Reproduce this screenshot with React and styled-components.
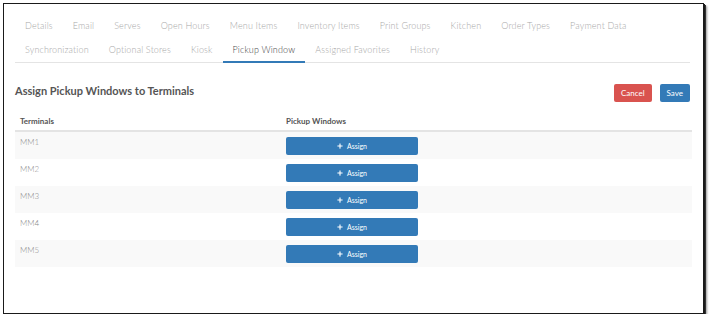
import React from "react";
import styled, { createGlobalStyle } from "styled-components";
import { FaPlus } from "react-icons/fa";

const GlobalStyle = createGlobalStyle`
  html, body {
    margin: 0;
    padding: 0;
    background: #ffffff;
  }
  body {
    font-family: "Lato", "Open Sans", sans-serif;
  }
`;

const tabs = [
  "Details",
  "Email",
  "Serves",
  "Open Hours",
  "Menu Items",
  "Inventory Items",
  "Print Groups",
  "Kitchen",
  "Order Types",
  "Payment Data",
  "Synchronization",
  "Optional Stores",
  "Kiosk",
  "Pickup Window",
  "Assigned Favorites",
  "History",
];

const terminals = ["MM1", "MM2", "MM3", "MM4", "MM5"];

function App() {
  return (
    <>
      <GlobalStyle />
      <Frame>
        <TabBar>
          {tabs.map((t) => (
            <Tab key={t} $active={t === "Pickup Window"}>
              {t}
            </Tab>
          ))}
        </TabBar>

        <HeadRow>
          <Title>Assign Pickup Windows to Terminals</Title>
          <Actions>
            <ActionButton $variant="danger">Cancel</ActionButton>
            <ActionButton $variant="primary">Save</ActionButton>
          </Actions>
        </HeadRow>

        <Table>
          <thead>
            <tr>
              <Th $first>Terminals</Th>
              <Th>Pickup Windows</Th>
            </tr>
          </thead>
          <tbody>
            {terminals.map((name, i) => (
              <Row key={name} $striped={i % 2 === 0}>
                <Td>{name}</Td>
                <Td>
                  <AssignButton>
                    <FaPlus size={6} />
                    <span>Assign</span>
                  </AssignButton>
                </Td>
              </Row>
            ))}
          </tbody>
        </Table>
      </Frame>
    </>
  );
}

export default App;

const Frame = styled.div`
  box-sizing: border-box;
  margin: 3px 0 0 3px;
  width: 701px;
  height: 311px;
  border: 1px solid #1a1a1a;
  box-shadow: 1px 1px 0 #1a1a1a, 2px 2px 0 #333, 3px 3px 2px #9a9a9a;
  padding: 10px 13px 0 11px;
  background: #fff;
`;

const TabBar = styled.ul`
  list-style: none;
  margin: 0;
  padding: 0;
  display: flex;
  flex-wrap: wrap;
  border-bottom: 1px solid #e4e4e4;
`;

const Tab = styled.li`
  padding: 5px 10px 4px;
  height: 14px;
  line-height: 14px;
  font-size: 9px;
  font-weight: 300;
  letter-spacing: 0.15px;
  color: ${(p) => (p.$active ? "#444" : "#a8a8a8")};
  border-bottom: 2px solid ${(p) => (p.$active ? "#337ab7" : "transparent")};
  margin-bottom: -1px;
  white-space: nowrap;
`;

const HeadRow = styled.div`
  display: flex;
  justify-content: space-between;
  align-items: flex-start;
  padding-top: 21px;
`;

const Title = styled.h3`
  margin: 0;
  font-size: 11px;
  line-height: 13px;
  font-weight: 700;
  color: #555;
`;

const Actions = styled.div`
  display: flex;
  gap: 8px;
`;

const ActionButton = styled.button`
  height: 18px;
  padding: 0 7px;
  border: none;
  border-radius: 2px;
  font-family: inherit;
  font-size: 8px;
  color: #fff;
  background: ${(p) => (p.$variant === "danger" ? "#d9534f" : "#337ab7")};
`;

const Table = styled.table`
  margin-top: 9px;
  width: 677px;
  border-collapse: collapse;
`;

const Th = styled.th`
  text-align: left;
  font-size: 8px;
  font-weight: 700;
  color: #555;
  padding: 5px 5px 4px;
  line-height: 10px;
  width: ${(p) => (p.$first ? "256px" : "auto")};
  border-bottom: 2px solid #e4e4e4;
`;

const Row = styled.tr`
  background: ${(p) => (p.$striped ? "#f9f9f9" : "#fff")};
  & + & td {
    border-top: 1px solid #e4e4e4;
  }
`;

const Td = styled.td`
  padding: 5px 5px 4px;
  height: 18px;
  vertical-align: top;
  font-size: 8px;
  font-weight: 300;
  line-height: 10px;
  color: #8a8a8a;
`;

const AssignButton = styled.button`
  display: flex;
  align-items: center;
  justify-content: center;
  gap: 4px;
  width: 132px;
  height: 18px;
  border: none;
  border-radius: 2px;
  background: #337ab7;
  color: #fff;
  font-family: inherit;
  font-size: 7px;
  padding: 0;
`;
